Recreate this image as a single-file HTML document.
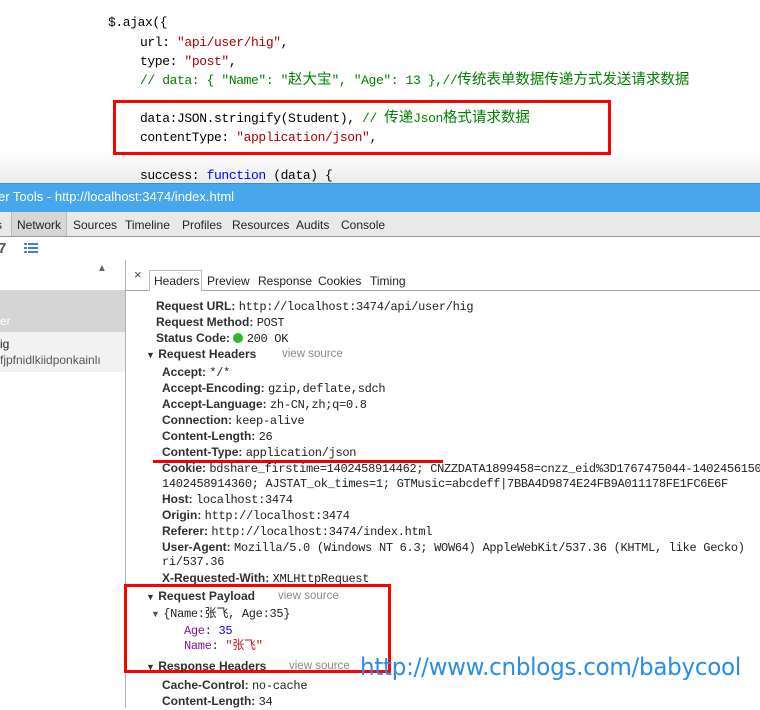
<!DOCTYPE html>
<html><head><meta charset="utf-8"><style>
*{margin:0;padding:0;box-sizing:border-box}
body{width:760px;height:708px;overflow:hidden;background:#fff;position:relative;font-family:"Liberation Sans","Noto Sans CJK SC",sans-serif}
.a{position:absolute;white-space:nowrap}
.code{font-family:"Liberation Mono","Noto Sans CJK SC",monospace;font-size:13px;letter-spacing:-0.4px;color:#000;line-height:16px}
.code .z{font-size:14.5px;letter-spacing:0}
.s{color:#b00000}.c{color:#008000}.k{color:#0000ff}
.tb{font-size:12px;color:#222;line-height:16px}
.h{font-size:12px;line-height:16px;color:#222}
.h b{font-weight:bold;color:#303030}
.m{font-family:"Liberation Mono","Noto Sans CJK SC",monospace;font-size:12px;letter-spacing:-0.3px}
.vs{color:#888;font-weight:normal;font-size:11.5px}
</style></head><body>
<div class="a" style="left:0;top:150px;width:760px;height:33px;background:linear-gradient(#fff,#ececec)"></div>
<div class="a code" style="left:108px;top:15px">$.ajax({</div>
<div class="a code" style="left:140px;top:35px">url: <span class="s">"api/user/hig"</span>,</div>
<div class="a code" style="left:140px;top:54px">type: <span class="s">"post"</span>,</div>
<div class="a code c" style="left:140px;top:73px">// data: { "Name": "<span class="z">赵大宝</span>", "Age": 13 },//<span class="z">传统表单数据传递方式发送请求数据</span></div>
<div class="a" style="left:113px;top:100px;width:498px;height:55px;border:3px solid #f00"></div>
<div class="a code" style="left:140px;top:111px">data:JSON.stringify(Student),  <span class="c">// <span class="z">传递</span>Json<span class="z">格式请求数据</span></span></div>
<div class="a code" style="left:140px;top:130px">contentType: <span class="s">"application/json"</span>,</div>
<div class="a code" style="left:140px;top:168px">success: <span class="k">function</span> (data) {</div>
<div class="a" style="left:0;top:183px;width:760px;height:29px;background:#47a6ec;border-top:1px solid #3a8fd0"></div>
<div class="a" style="left:-2px;top:189px;color:#fff;font-size:13px">er Tools - http://localhost:3474/index.html</div>
<div class="a" style="left:0;top:212px;width:760px;height:25px;background:#e9e9e9;border-bottom:1px solid #9a9a9a"></div>
<div class="a" style="left:11px;top:212px;width:56px;height:24px;background:#d6d6d6;border-left:1px solid #bbb;border-right:1px solid #bbb"></div>
<div class="a tb" style="left:-4px;top:217px">s</div>
<div class="a tb" style="left:17px;top:217px">Network</div>
<div class="a tb" style="left:73px;top:217px">Sources</div>
<div class="a tb" style="left:125px;top:217px">Timeline</div>
<div class="a tb" style="left:182px;top:217px">Profiles</div>
<div class="a tb" style="left:232px;top:217px">Resources</div>
<div class="a tb" style="left:296px;top:217px">Audits</div>
<div class="a tb" style="left:341px;top:217px">Console</div>
<div class="a" style="left:-2px;top:240px;font-size:15px;color:#555;font-weight:bold">7</div>
<svg class="a" style="left:24px;top:243px" width="14" height="12"><g fill="#3a7ee0"><rect x="0" y="0" width="3" height="2"/><rect x="4" y="0" width="10" height="2"/><rect x="0" y="4" width="3" height="2"/><rect x="4" y="4" width="10" height="2"/><rect x="0" y="8" width="3" height="2"/><rect x="4" y="8" width="10" height="2"/></g></svg>
<div class="a" style="left:125px;top:260px;width:1px;height:448px;background:#b0b0b0"></div>
<div class="a" style="left:97px;top:263px;font-size:10px;color:#666">▲</div>
<div class="a" style="left:0;top:290px;width:125px;height:42px;background:#d5d5d5"></div>
<div class="a" style="left:0;top:314px;color:#fff;font-size:12px">er</div>
<div class="a" style="left:0;top:332px;width:125px;height:40px;background:#f2f2f2"></div>
<div class="a" style="left:0;top:337px;font-size:12px;color:#222">ig</div>
<div class="a" style="left:0;top:353px;font-size:12px;color:#555">fjpfnidlkiidponkainlı</div>
<div class="a" style="left:126px;top:290px;width:634px;height:1px;background:#aaa"></div>
<div class="a" style="left:134px;top:267px;font-size:13px;color:#444">×</div>
<div class="a" style="left:149px;top:270px;width:53px;height:21px;border:1px solid #bbb;border-bottom:none;background:#fff"></div>
<div class="a tb" style="left:154px;top:273px">Headers</div>
<div class="a tb" style="left:207px;top:273px">Preview</div>
<div class="a tb" style="left:258px;top:273px">Response</div>
<div class="a tb" style="left:318px;top:273px">Cookies</div>
<div class="a tb" style="left:370px;top:273px">Timing</div>

<div class="a h" style="left:156px;top:298px"><b>Request URL:</b> <span class="m">http://localhost:3474/api/user/hig</span></div>
<div class="a h" style="left:156px;top:314px"><b>Request Method:</b> <span class="m">POST</span></div>
<div class="a h" style="left:156px;top:330px"><b>Status Code:</b> <span style="display:inline-block;width:10px;height:10px;border-radius:5px;background:#2eb82e;vertical-align:-1px"></span> <span class="m">200 OK</span></div>
<div class="a h" style="left:146px;top:346px"><b><span style="font-size:9px">▼</span> Request Headers</b></div>
<div class="a h vs" style="left:282px;top:346px">view source</div>
<div class="a h" style="left:162px;top:364px"><b>Accept:</b> <span class="m">*/*</span></div>
<div class="a h" style="left:162px;top:380px"><b>Accept-Encoding:</b> <span class="m">gzip,deflate,sdch</span></div>
<div class="a h" style="left:162px;top:396px"><b>Accept-Language:</b> <span class="m">zh-CN,zh;q=0.8</span></div>
<div class="a h" style="left:162px;top:412px"><b>Connection:</b> <span class="m">keep-alive</span></div>
<div class="a h" style="left:162px;top:428px"><b>Content-Length:</b> <span class="m">26</span></div>
<div class="a h" style="left:162px;top:444px"><b>Content-Type:</b> <span class="m">application/json</span></div>
<div class="a" style="left:153px;top:460px;width:290px;height:3px;background:#e00"></div>
<div class="a h" style="left:162px;top:460px"><b>Cookie:</b> <span class="m">bdshare_firstime=1402458914462; CNZZDATA1899458=cnzz_eid%3D1767475044-1402456150</span></div>
<div class="a h m" style="left:162px;top:476px">1402458914360; AJSTAT_ok_times=1; GTMusic=abcdeff|7BBA4D9874E24FB9A011178FE1FC6E6F</div>
<div class="a h" style="left:162px;top:491px"><b>Host:</b> <span class="m">localhost:3474</span></div>
<div class="a h" style="left:162px;top:507px"><b>Origin:</b> <span class="m">http://localhost:3474</span></div>
<div class="a h" style="left:162px;top:523px"><b>Referer:</b> <span class="m">http://localhost:3474/index.html</span></div>
<div class="a h" style="left:162px;top:539px"><b>User-Agent:</b> <span class="m">Mozilla/5.0 (Windows NT 6.3; WOW64) AppleWebKit/537.36 (KHTML, like Gecko)</span></div>
<div class="a h m" style="left:162px;top:554px">ri/537.36</div>
<div class="a h" style="left:162px;top:570px"><b>X-Requested-With:</b> <span class="m">XMLHttpRequest</span></div>
<div class="a" style="left:124px;top:584px;width:267px;height:89px;border:3px solid #f00"></div>
<div class="a h" style="left:146px;top:588px"><b><span style="font-size:9px">▼</span> Request Payload</b></div>
<div class="a h vs" style="left:278px;top:588px">view source</div>
<div class="a h" style="left:151px;top:605px"><span style="font-size:9px;color:#555">▼</span> <span class="m">{Name:张飞, Age:35}</span></div>
<div class="a h m" style="left:184px;top:623px"><span style="color:#881391">Age</span>: <span style="color:#1c00cf">35</span></div>
<div class="a h m" style="left:184px;top:638px"><span style="color:#881391">Name</span>: <span style="color:#c41a16">"张飞"</span></div>
<div class="a h" style="left:146px;top:658px"><b><span style="font-size:9px">▼</span> Response Headers</b></div>
<div class="a h vs" style="left:289px;top:658px">view source</div>
<div class="a h" style="left:162px;top:677px"><b>Cache-Control:</b> <span class="m">no-cache</span></div>
<div class="a h" style="left:162px;top:693px"><b>Content-Length:</b> <span class="m">34</span></div>
<div class="a" style="left:360px;top:653px;font-size:24px;color:#2a8ee8;transform:scaleX(.96);transform-origin:left;font-family:'DejaVu Sans',sans-serif;letter-spacing:-0.3px">http://www.cnblogs.com/babycool</div>
</body></html>
